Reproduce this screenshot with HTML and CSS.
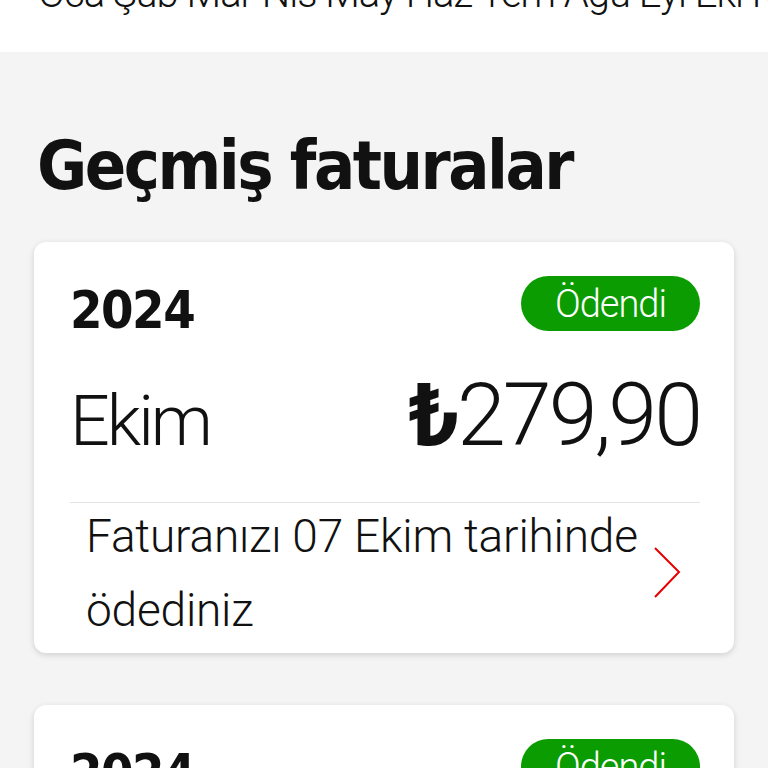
FILE: index.html
```html
<!DOCTYPE html>
<html lang="tr">
<head>
    <meta charset="UTF-8">
    <meta name="viewport" content="width=device-width, initial-scale=1.0">
    <title>Geçmiş faturalar</title>
    <link rel="stylesheet" href="styles.css">
</head>
<body>
    <div class="months">
        <div class="months-row">Oca Şub Mar Nis May Haz Tem Ağu Eyl Eki Kas Ara</div>
    </div>

    <main class="history">
        <h1 class="title">Geçmiş faturalar</h1>

        <div class="bill-card">
            <div class="bill-head">
                <span class="bill-year">2024</span>
                <span class="badge">Ödendi</span>
            </div>
            <div class="bill-amount-row">
                <span class="bill-month">Ekim</span>
                <span class="bill-amount"><span class="lira">₺</span>279,90</span>
            </div>
            <div class="bill-foot">
                <p class="bill-note">Faturanızı 07 Ekim tarihinde ödediniz</p>
                <svg class="chevron" width="30" height="54" viewBox="0 0 30 54">
                    <path d="M3 2 L27 26 L3 51" fill="none" stroke="#e60000" stroke-width="2"/>
                </svg>
            </div>
        </div>

        <div class="bill-card">
            <div class="bill-head">
                <span class="bill-year">2024</span>
                <span class="badge">Ödendi</span>
            </div>
            <div class="bill-amount-row">
                <span class="bill-month">Eylül</span>
                <span class="bill-amount"><span class="lira">₺</span>279,90</span>
            </div>
        </div>
    </main>
</body>
</html>
```

FILE: styles.css
```css
* {
    margin: 0;
    padding: 0;
    box-sizing: border-box;
}

body {
    font-family: 'Roboto', 'Noto Sans', sans-serif;
    background: #f4f4f4;
    color: #111;
    height: 768px;
    overflow: hidden;
}

.months {
    background: #fff;
    height: 52px;
    overflow: hidden;
}

.months-row {
    margin-top: -30px;
    padding-left: 38px;
    font-size: 40px;
    font-weight: 300;
    line-height: 48px;
    white-space: nowrap;
    letter-spacing: -1px;
}

.history {
    padding: 0 34px;
}

.title {
    font-family: 'DejaVu Sans Condensed', 'DejaVu Sans', sans-serif;
    font-weight: bold;
    font-size: 68px;
    line-height: 80px;
    padding: 74px 0 0 3px;
    margin-bottom: 36px;
    letter-spacing: -2.5px;
}

.bill-card {
    background: #fff;
    border-radius: 12px;
    box-shadow: 0 2px 6px rgba(0, 0, 0, 0.15);
    padding: 34px 34px 0 36px;
    margin-bottom: 52px;
}

.bill-head {
    display: flex;
    justify-content: space-between;
    align-items: center;
    height: 55px;
}

.bill-year {
    font-family: 'DejaVu Sans Condensed', 'DejaVu Sans', sans-serif;
    font-weight: bold;
    font-size: 52px;
    letter-spacing: -1.5px;
    padding-top: 12px;
}

.badge {
    background: #0a9c00;
    color: #fff;
    border-radius: 28px;
    height: 55px;
    width: 179px;
    display: flex;
    justify-content: center;
    align-items: center;
    font-size: 38px;
    font-weight: 300;
    letter-spacing: -1px;
}

.bill-amount-row {
    display: flex;
    justify-content: space-between;
    align-items: baseline;
    padding-top: 32px;
    height: 172px;
    border-bottom: 1px solid #e4e4e4;
}

.bill-month {
    font-size: 70px;
    font-weight: 300;
    letter-spacing: -3px;
}

.bill-amount {
    font-size: 88px;
    font-weight: 300;
    letter-spacing: -3px;
}

.lira {
    font-weight: bold;
}

.bill-foot {
    display: flex;
    justify-content: space-between;
    align-items: center;
    padding: 0 18px 6px 16px;
    margin-top: -4px;
}

.bill-note {
    font-size: 46px;
    font-weight: 300;
    line-height: 74px;
    width: 560px;
    letter-spacing: -0.2px;
}
```
